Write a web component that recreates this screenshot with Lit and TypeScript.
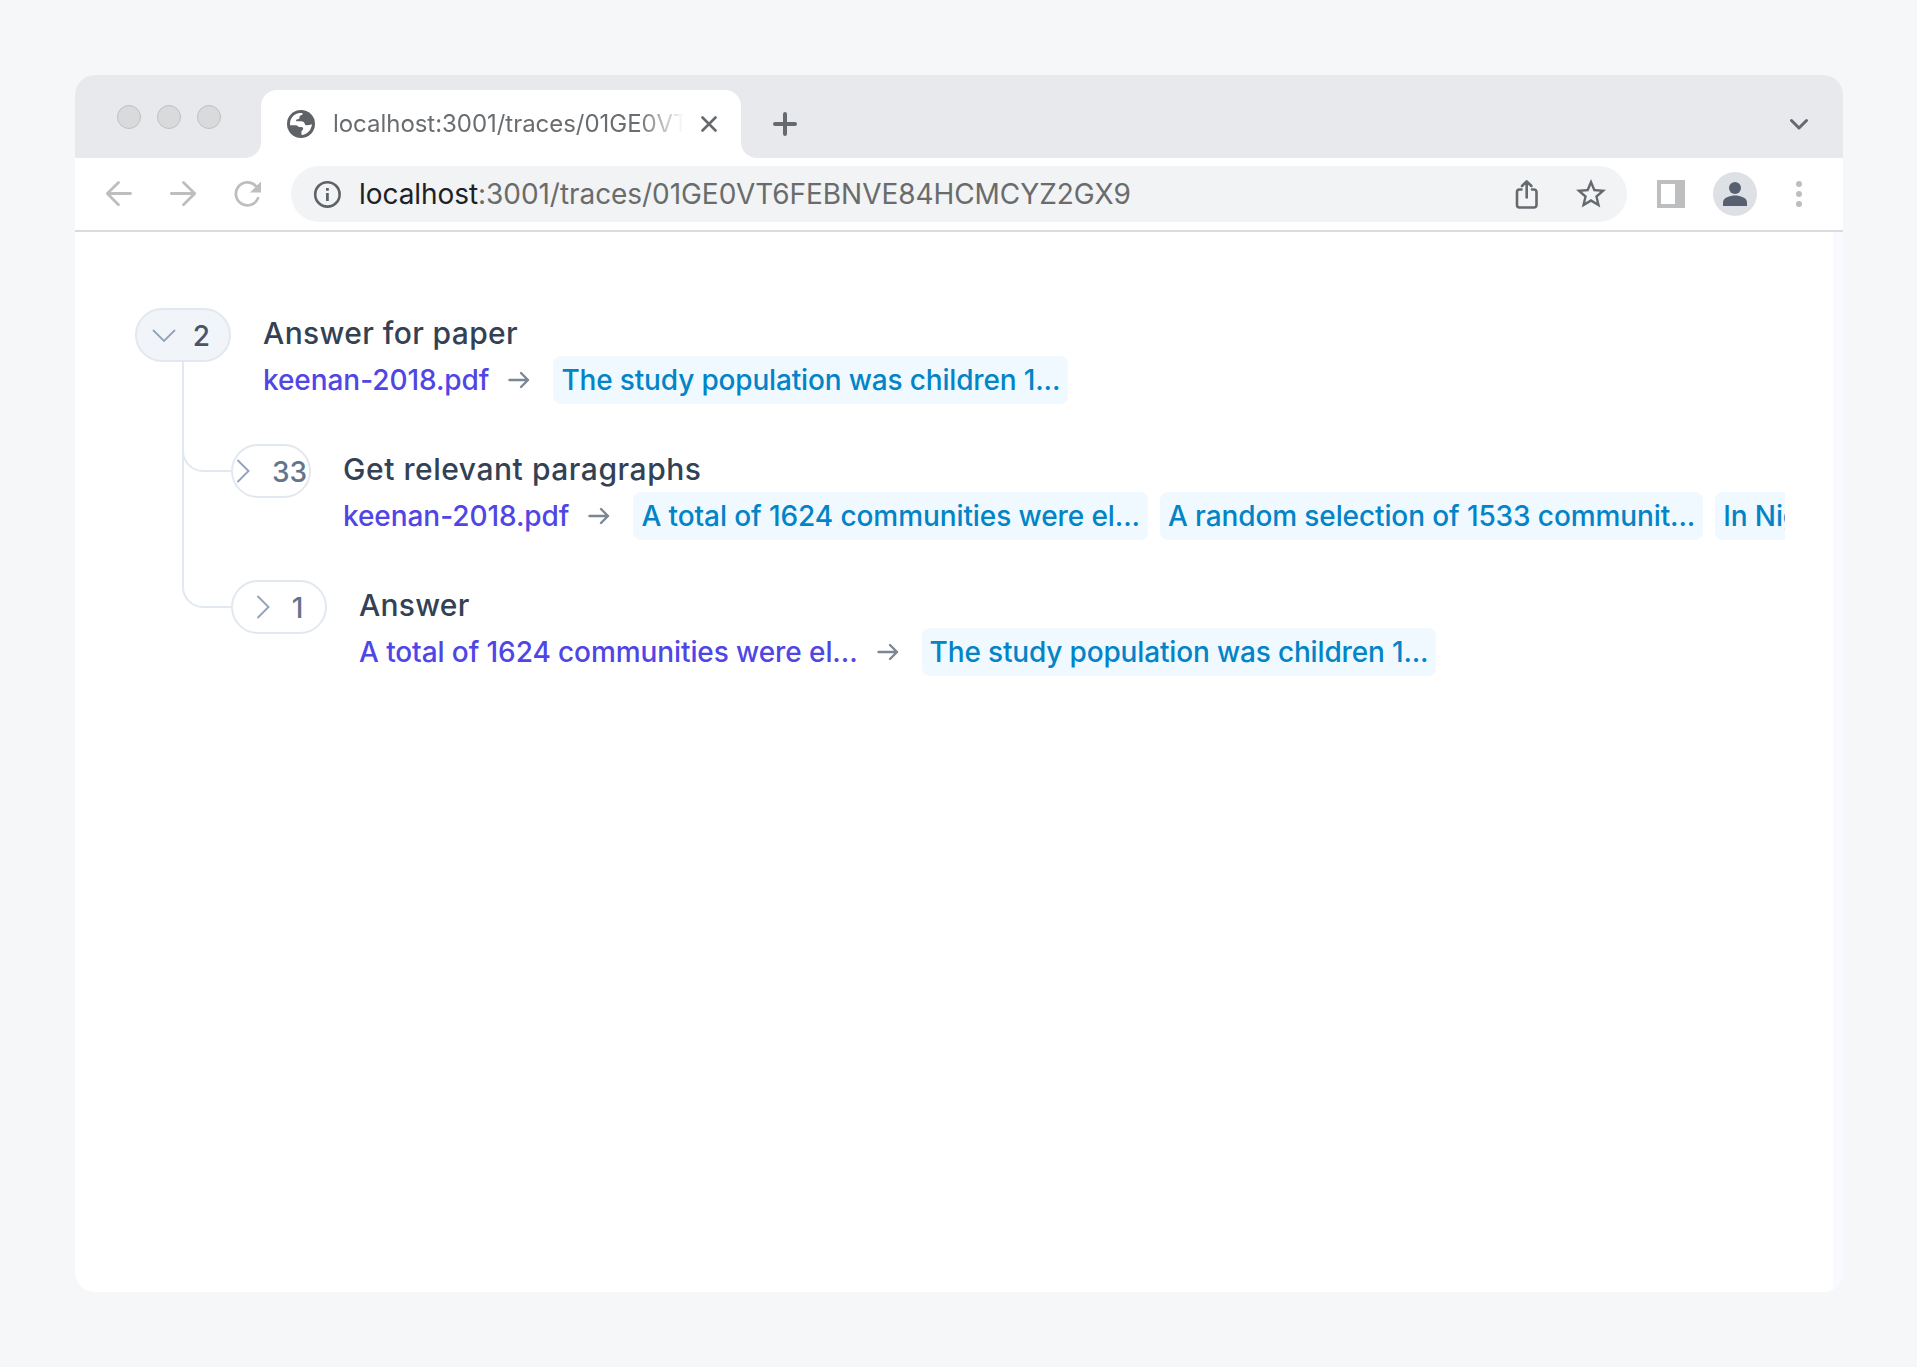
import { LitElement, html, css, svg } from "lit";
import { customElement, property } from "lit/decorators.js";

interface Label {
  text: string;
  tracking: number;
}

interface Trace {
  count: string;
  open?: boolean;
  narrow?: boolean;
  title: Label;
  input: Label;
  outputs: Label[];
}

const STUDY: Label = { text: "The study population was children 1...", tracking: -0.16 };
const TOTAL: Label = { text: "A total of 1624 communities were el...", tracking: -0.09 };
const PAPER: Label = { text: "keenan-2018.pdf", tracking: -0.06 };

const ROOT: Trace = {
  count: "2",
  open: true,
  title: { text: "Answer for paper", tracking: 0.38 },
  input: PAPER,
  outputs: [STUDY],
};

const CHILDREN: Trace[] = [
  {
    count: "33",
    narrow: true,
    title: { text: "Get relevant paragraphs", tracking: 0.54 },
    input: PAPER,
    outputs: [TOTAL, { text: "A random selection of 1533 communit...", tracking: -0.11 }, { text: "In Niger, a census was conducted...", tracking: -0.11 }],
  },
  {
    count: "1",
    title: { text: "Answer", tracking: 0.25 },
    input: TOTAL,
    outputs: [STUDY],
  },
];

@customElement("trace-row")
export class TraceRow extends LitElement {
  @property({ attribute: false }) trace!: Trace;

  static styles = css`
    :host { display: flex; height: 136px; min-width: 0; }
    .pill {
      box-sizing: border-box; flex: none; width: 96px; height: 54px; padding-right: 4px;
      border: 2px solid #e2e8f0; border-radius: 27px; background: #fff; color: #64748b;
      display: flex; align-items: center; justify-content: center; gap: 17px;
      font-size: 28px; font-weight: 500; line-height: 54px;
    }
    .open { background: #f1f5f9; color: #475569; }
    .narrow { width: 80px; }
    .n { padding-top: 1px; }
    .chev { flex: none; width: 24px; height: 24px; fill: none; stroke: #94a3b8; stroke-width: 1.9; stroke-linecap: round; }
    .body { margin-left: 32px; min-width: 0; flex: 1; overflow: hidden; }
    .title { box-sizing: border-box; padding-top: 1px; font-size: 30px; line-height: 48px; height: 48px; font-weight: 500; color: #334155; white-space: nowrap; }
    .io { display: flex; align-items: center; height: 48px; font-size: 28px; font-weight: 500; line-height: 49px; white-space: nowrap; }
    .in { color: #4f46e5; }
    .arrow { flex: none; width: 24px; height: 24px; margin: 0 22px 0 18px; fill: none; stroke: #7b8794; stroke-width: 2.4; stroke-linecap: round; stroke-linejoin: round; }
    .chips { display: flex; gap: 12px; }
    .chip { padding: 0 8px; height: 48px; border-radius: 8px; background: #f0f9ff; color: #0284c7; }
  `;

  render() {
    const t = this.trace;
    return html`
      <div class="pill ${t.open ? "open" : ""} ${t.narrow ? "narrow" : ""}">
        <svg class="chev" viewBox="0 0 24 24">
          ${t.open ? svg`<path d="M1.5 7.5 12 18 22.500 7.500"/>` : svg`<path d="M7 1.500 17.500 12 7 22.500"/>`}
        </svg>
        <span class="n">${t.count}</span>
      </div>
      <div class="body">
        <div class="title" style="letter-spacing:${t.title.tracking}px">${t.title.text}</div>
        <div class="io">
          <span class="in" style="letter-spacing:${t.input.tracking}px">${t.input.text}</span>
          <svg class="arrow" viewBox="0 0 24 24"><path d="M2.500 12H21M14 5l7 7-7 7"/></svg>
          <div class="chips">${t.outputs.map((o) => html`<span class="chip" style="letter-spacing:${o.tracking}px">${o.text}</span>`)}</div>
        </div>
      </div>
    `;
  }
}

@customElement("app-root")
export class AppRoot extends LitElement {
  static styles = css`
    :host {
      display: block; box-sizing: border-box; width: 1917px; height: 1367px; padding: 75px 74px 75px 75px;
      background: #f5f7f9; font-family: Inter, "Liberation Sans", sans-serif; overflow: hidden;
    }
    .window { display: flex; flex-direction: column; height: 1217px; border-radius: 20px; overflow: hidden; background: #fff; }
    .top { flex: none; height: 15px; background: #e8e9ed; }
    .strip { flex: none; display: flex; height: 68px; }
    .lights { box-sizing: border-box; width: 186px; padding: 15px 0 0 42px; display: flex; gap: 16px; background: #e8e9ed; border-bottom-right-radius: 16px; }
    .light { box-sizing: border-box; width: 24px; height: 24px; border-radius: 50%; background: #d9dadb; border: 1px solid #bfc0c1; }
    .tabwrap { width: 480px; background: linear-gradient(#e8e9ed 50%, #fff 50%); }
    .tab { box-sizing: border-box; height: 68px; padding: 0 24px 0 26px; background: #fff; border-radius: 16px 16px 0 0; display: flex; align-items: center; }
    .globe { width: 28px; height: 28px; flex: none; }
    .tabtext {
      margin-left: 18px; width: 351px; overflow: hidden; white-space: nowrap; font-size: 24px; line-height: 34px; letter-spacing: -0.04px; color: #6a6d70;
      -webkit-mask-image: linear-gradient(90deg, #000 305px, transparent 351px); mask-image: linear-gradient(90deg, #000 305px, transparent 351px);
    }
    .close { width: 16px; height: 16px; margin-left: auto; flex: none; }
    .rest { flex: 1; display: flex; align-items: center; justify-content: space-between; padding: 0 35px 0 32px; background: #e8e9ed; border-bottom-left-radius: 16px; }
    .line { fill: none; stroke: #66696d; stroke-linecap: round; stroke-linejoin: round; }
    .bar { box-sizing: border-box; flex: none; height: 74px; border-bottom: 2px solid #dadbdd; display: flex; align-items: center; padding-left: 29px; }
    .nav { display: flex; gap: 32px; }
    .nav svg { width: 32px; height: 32px; }
    .dim { fill: none; stroke: #bdbebf; stroke-width: 2.8; stroke-linecap: round; stroke-linejoin: round; }
    .omni { box-sizing: border-box; width: 1336px; height: 56px; margin-left: 27px; padding: 0 18px 0 22px; border-radius: 28px; background: #f1f3f4; display: flex; align-items: center; }
    .info { width: 28px; height: 28px; flex: none; }
    .url { margin-left: 18px; font-size: 28px; line-height: 40px; letter-spacing: -0.06px; color: #6a6b6d; white-space: nowrap; flex: 1; }
    .host { color: #202124; }
    .share { width: 28px; height: 32px; margin-right: 32px; }
    .star { width: 36px; height: 36px; }
    .side { width: 28px; height: 28px; margin-left: 30px; }
    .avatar { width: 44px; height: 44px; margin-left: 28px; }
    .dots { width: 8px; height: 28px; margin-left: 38px; }
    .page { flex: 1; display: flex; min-height: 0; }
    .content { flex: 1; min-width: 0; box-sizing: border-box; padding: 76px 48px 0 60px; overflow: hidden; }
    .scroll { width: 10px; background: #f8faff; }
    .kids { display: flex; }
    .wires { flex: none; width: 96px; height: 272px; margin-top: -82px; }
    .list { flex: 1; min-width: 0; }
    .wires path { fill: none; stroke: #e2e8f0; stroke-width: 2; }
  `;

  render() {
    return html`
      <div class="window">
        <div class="top"></div>
        <div class="strip">
          <div class="lights"><i class="light"></i><i class="light"></i><i class="light"></i></div>
          <div class="tabwrap">
            <div class="tab">
              <svg class="globe" viewBox="0 0 28 28">
                <circle cx="14" cy="14" r="14" fill="#5f6368"/>
                <path fill="#fff" d="M3 13.500C3.200 8 7.500 3.600 13 3.100c1.500-.1 2.700.2 2.800.9-.6 1.500-3 .8-3.200 2.600-.1 1.800-.3 2.500-1.900 2.600-1.500.2-1.800.9-1.500 1.700.4.600 2.800.4 4.700.4 2.300 0 4.200 1.500 4.200 3.700 1.500.300 3.500.100 6.900-.800C24.400 20 20 24.700 14.500 25l-.1-3.300c.2-1.300 1.800-1.700 1.800-3.200 0-1.700-1.600-1.400-3.800-1.500-1.400-.1-1.700-1.700-3.600-1.700H3.100z"/>
              </svg>
              <div class="tabtext">localhost:3001/traces/01GE0VT6FEB</div>
              <svg class="close line" viewBox="0 0 16 16"><path stroke-width="2.600" d="M1.500 1.500l13 13M14.500 1.500l-13 13"/></svg>
            </div>
          </div>
          <div class="rest">
            <svg class="line" width="24" height="24" viewBox="0 0 24 24"><path stroke-width="4" d="M12 2v20M2 12h20"/></svg>
            <svg class="line" width="18" height="12" viewBox="0 0 18 12"><path stroke-width="3" d="M1.500 2.500 9 10 16.500 2.500"/></svg>
          </div>
        </div>
        <div class="bar">
          <div class="nav">
            <svg class="dim" viewBox="0 0 32 32"><path d="M26.500 15.500H4M14.500 4.500 3.300 15.500 14.500 26.700"/></svg>
            <svg class="dim" viewBox="0 0 32 32"><path d="M3.300 15.500H26M15.500 4.500 26.700 15.500 15.500 26.700"/></svg>
            <svg class="dim" viewBox="0 0 32 32"><path d="M26 20.300A11.500 11.500 0 1 1 23.500 7.700"/><path fill="#bdbebf" stroke="none" d="M29 3.500V14.500H18z"/></svg>
          </div>
          <div class="omni">
            <svg class="info" viewBox="0 0 28 28"><g transform="translate(.4 .4)"><circle cx="14" cy="14" r="12.200" fill="none" stroke="#5f6368" stroke-width="2.600"/><path fill="#5f6368" d="M12.600 7.500h2.800v2.800h-2.800zM12.600 12.500h2.800v8h-2.800z"/></g></svg>
            <div class="url"><span class="host">localhost</span>:3001/traces/01GE0VT6FEBNVE84HCMCYZ2GX9</div>
            <svg class="share line" viewBox="0 0 28 32"><path stroke-width="2.600" d="M8.500 11.500H6.500A2.500 2.500 0 0 0 4 14v13a2.500 2.500 0 0 0 2.500 2.500h14.500a2.500 2.500 0 0 0 2.500-2.500V14a2.500 2.500 0 0 0-2.500-2.500h-2M13.700 19.500V4M9 8l4.700-4.700L18.400 8"/></svg>
            <svg class="star" viewBox="0 0 24 24"><path fill="#66696d" d="M22 9.240l-7.190-.62L12 2 9.190 8.630 2 9.240l5.460 4.730L5.820 21 12 17.270 18.180 21l-1.630-7.030L22 9.240zM12 15.400l-3.760 2.270 1-4.280-3.320-2.880 4.380-.38L12 6.100l1.710 4.040 4.380.38-3.320 2.880 1 4.280L12 15.400z"/></svg>
          </div>
          <svg class="side" viewBox="0 0 28 28"><path fill="#bdbebf" fill-rule="evenodd" d="M0 0h28v28H0zM4 4v20h14V4z"/></svg>
          <svg class="avatar" viewBox="0 0 44 44"><circle cx="22" cy="22" r="22" fill="#dde1e6"/><circle cx="22" cy="16" r="6" fill="#566071"/><path fill="#566071" d="M10 34v-3.500c0-5 7-7 12-7s12 2 12 7V34z"/></svg>
          <svg class="dots" viewBox="0 0 8 28"><g fill="#bdbebf"><circle cx="4" cy="4" r="3"/><circle cx="4" cy="14" r="3"/><circle cx="4" cy="24" r="3"/></g></svg>
        </div>
        <div class="page">
          <div class="content">
            <trace-row .trace=${ROOT}></trace-row>
            <div class="kids">
              <svg class="wires" viewBox="0 0 96 272"><path d="M48 0V225a20 20 0 0 0 20 20H96M48 89a20 20 0 0 0 20 20H96"/></svg>
              <div class="list">${CHILDREN.map((c) => html`<trace-row .trace=${c}></trace-row>`)}</div>
            </div>
          </div>
          <div class="scroll"></div>
        </div>
      </div>
    `;
  }
}
